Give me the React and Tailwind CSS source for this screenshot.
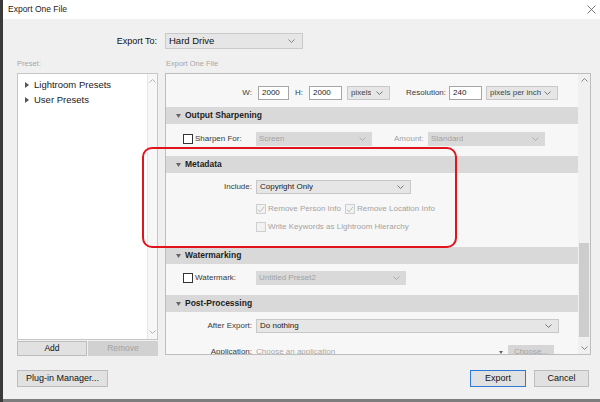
import React from 'react';

const Chevron = ({ className = '' }) => (
    <svg width="7" height="4" viewBox="0 0 7 4" className={className}>
        <path d="M0.5 0.5 L3.5 3.5 L6.5 0.5" fill="none" stroke="currentColor" strokeWidth="0.9" />
    </svg>
);

const Select = ({ w, children, disabled, dark }) => (
    <div
        className={`${w} h-[14px] flex items-center justify-between pl-[3px] pr-[6px] shrink-0 ${
            disabled
                ? 'bg-[#d9d9d9] text-[#a3a3a3]'
                : 'bg-[#e6e6e6] border border-[#c8c8c8] ' + (dark ? 'text-[#1a1a1a]' : 'text-[#444]')
        }`}
    >
        <span className="leading-none truncate">{children}</span>
        <Chevron className={disabled ? 'text-[#a8a8a8]' : 'text-[#666]'} />
    </div>
);

const Input = ({ w, children }) => (
    <div className={`${w} h-[14px] shrink-0 bg-white border border-[#a6a6a6] flex items-center pl-[3px] text-[#222] leading-none`}>
        {children}
    </div>
);

const Checkbox = ({ checked, disabled }) => (
    <span
        className={`w-[10px] h-[10px] shrink-0 flex items-center justify-center border ${
            disabled ? 'border-[#cfcfcf] bg-[#f2f2f2]' : 'border-[#333] bg-white'
        }`}
    >
        {checked && (
            <svg width="8" height="7" viewBox="0 0 8 7">
                <path d="M0.8 3.6 L3 5.8 L7.2 0.8" fill="none" stroke="#b5b5b5" strokeWidth="0.9" />
            </svg>
        )}
    </span>
);

const Header = ({ title }) => (
    <div className="h-[17px] shrink-0 bg-[#d9d9d9] flex items-center pl-[10px]">
        <svg width="5" height="4" viewBox="0 0 5 4" className="text-[#666]">
            <path d="M0 0 L5 0 L2.5 4 Z" fill="currentColor" />
        </svg>
        <span className="ml-[4px] text-[8.5px] font-bold text-[#1e1e1e] leading-none">{title}</span>
    </div>
);

const Label = ({ children }) => (
    <span className="w-[86px] shrink-0 text-right leading-none text-[#3a3a3a]">{children}</span>
);

const Btn = ({ w, children, primary, disabled }) => (
    <div
        className={`${w} h-full flex items-center justify-center leading-none ${
            primary
                ? 'border border-[#2d7ad6] bg-[#e1e1e1] text-[#111]'
                : disabled
                ? 'bg-[#d1d1d1] text-[#a3a3a3]'
                : 'border border-[#bdbdbd] bg-[#e1e1e1] text-[#111]'
        }`}
    >
        {children}
    </div>
);

const ListTriangle = () => (
    <svg width="4" height="6" viewBox="0 0 4 6" className="text-[#555] shrink-0">
        <path d="M0 0 L4 3 L0 6 Z" fill="currentColor" />
    </svg>
);

export default function App() {
    return (
        <div
            className="relative w-[600px] h-[402px] flex bg-[#7d7d7d] overflow-hidden"
            style={{ fontFamily: '"Liberation Sans", Arial, sans-serif' }}
        >
            <div className="w-[3px] h-full bg-[#3a3a3a] shrink-0" />
            <div className="flex-1 flex flex-col h-[399px]">
                {/* title bar */}
                <div className="h-[19px] bg-white flex items-center justify-between pl-[5px] pr-[4px] shrink-0">
                    <span className="text-[8.5px] text-[#222] leading-none">Export One File</span>
                    <svg width="9" height="9" viewBox="0 0 9 9">
                        <path d="M0.5 0.5 L8.5 8.5 M8.5 0.5 L0.5 8.5" stroke="#555" strokeWidth="0.8" />
                    </svg>
                </div>

                <div className="flex-1 bg-[#f0f0f0] flex flex-col">
                    {/* export to */}
                    <div className="mt-[14px] h-[16px] flex items-center">
                        <span className="w-[154px] text-right text-[9px] text-[#111] leading-none">Export To:</span>
                        <div className="ml-[8px] w-[138px] h-full bg-[#e6e6e6] border border-[#cacaca] flex items-center justify-between pl-[3px] pr-[7px]">
                            <span className="text-[9.5px] text-[#111] leading-none">Hard Drive</span>
                            <Chevron className="text-[#777]" />
                        </div>
                    </div>

                    {/* labels */}
                    <div className="mt-[9px] h-[11px] flex items-center text-[7.5px] text-[#a6a6a6] leading-none">
                        <span className="ml-[14px] w-[148px]">Preset:</span>
                        <span className="ml-[1px]">Export One File</span>
                    </div>

                    {/* main */}
                    <div className="mt-[4px] flex items-start">
                        {/* preset list */}
                        <div className="ml-[14px] w-[141px] flex flex-col">
                            <div className="h-[267px] bg-white border border-[#c6c6c6] flex">
                                <div className="flex-1 pt-[3px] pl-[7px] text-[9.5px] text-[#1a1a1a]">
                                    <div className="h-[15px] flex items-center gap-[5px]">
                                        <ListTriangle />
                                        <span className="leading-none">Lightroom Presets</span>
                                    </div>
                                    <div className="h-[15px] flex items-center gap-[5px]">
                                        <ListTriangle />
                                        <span className="leading-none">User Presets</span>
                                    </div>
                                </div>
                                <div className="w-[10px] bg-[#f7f7f7] border-l border-[#e6e6e6] flex flex-col items-center justify-between py-[5px] text-[#aaa]">
                                    <Chevron className="rotate-180" />
                                    <Chevron />
                                </div>
                            </div>
                            <div className="mt-[1px] h-[15px] flex gap-[1px] text-[8.5px]">
                                <Btn w="w-[70px]">Add</Btn>
                                <Btn w="w-[70px]" disabled>
                                    Remove
                                </Btn>
                            </div>
                        </div>

                        {/* export panel */}
                        <div className="ml-[7px] w-[426px] h-[282px] border border-[#bdbdbd] flex overflow-hidden">
                            <div className="w-[412px] h-full bg-[#f7f7f7] flex flex-col overflow-hidden text-[8px] text-[#3a3a3a]">
                                {/* image sizing tail */}
                                <div className="h-[33px] shrink-0 pt-[12px]">
                                    <div className="h-[14px] flex items-center">
                                        <Label>W:</Label>
                                        <div className="ml-[6px]">
                                            <Input w="w-[31px]">2000</Input>
                                        </div>
                                        <span className="ml-[6px] leading-none">H:</span>
                                        <div className="ml-[6px]">
                                            <Input w="w-[33px]">2000</Input>
                                        </div>
                                        <div className="ml-[5px]">
                                            <Select w="w-[43px]">pixels</Select>
                                        </div>
                                        <span className="ml-[16px] w-[41px] leading-none">Resolution:</span>
                                        <div className="ml-[2px]">
                                            <Input w="w-[33px]">240</Input>
                                        </div>
                                        <div className="ml-[4px]">
                                            <Select w="w-[72px]">pixels per inch</Select>
                                        </div>
                                    </div>
                                </div>

                                <Header title="Output Sharpening" />
                                <div className="h-[32px] shrink-0 pt-[8px]">
                                    <div className="h-[14px] flex items-center">
                                        <div className="w-[90px] shrink-0 pl-[17px] flex items-center gap-[2px]">
                                            <Checkbox />
                                            <span className="leading-none">Sharpen For:</span>
                                        </div>
                                        <Select w="w-[116px]" disabled>
                                            Screen
                                        </Select>
                                        <span className="ml-[22px] w-[34px] leading-none text-[#a3a3a3]">Amount:</span>
                                        <Select w="w-[117px]" disabled>
                                            Standard
                                        </Select>
                                    </div>
                                </div>

                                <Header title="Metadata" />
                                <div className="h-[74px] shrink-0 pt-[7px]">
                                    <div className="h-[14px] flex items-center">
                                        <Label>Include:</Label>
                                        <div className="ml-[4px]">
                                            <Select w="w-[155px]" dark>
                                                Copyright Only
                                            </Select>
                                        </div>
                                    </div>
                                    <div className="mt-[10px] h-[10px] flex items-center pl-[90px] text-[#a3a3a3]">
                                        <Checkbox checked disabled />
                                        <span className="ml-[2px] w-[77px] leading-none">Remove Person Info</span>
                                        <Checkbox checked disabled />
                                        <span className="ml-[2px] leading-none">Remove Location Info</span>
                                    </div>
                                    <div className="mt-[8px] h-[10px] flex items-center pl-[90px] text-[#a3a3a3]">
                                        <Checkbox disabled />
                                        <span className="ml-[2px] leading-none">Write Keywords as Lightroom Hierarchy</span>
                                    </div>
                                </div>

                                <Header title="Watermarking" />
                                <div className="h-[31px] shrink-0 pt-[7px]">
                                    <div className="h-[14px] flex items-center">
                                        <div className="w-[90px] shrink-0 pl-[17px] flex items-center gap-[2px]">
                                            <Checkbox />
                                            <span className="leading-none">Watermark:</span>
                                        </div>
                                        <Select w="w-[150px]" disabled>
                                            Untitled Preset2
                                        </Select>
                                    </div>
                                </div>

                                <Header title="Post-Processing" />
                                <div className="shrink-0 pt-[7px]">
                                    <div className="h-[14px] flex items-center">
                                        <Label>After Export:</Label>
                                        <div className="ml-[4px]">
                                            <Select w="w-[303px]" dark>
                                                Do nothing
                                            </Select>
                                        </div>
                                    </div>
                                    <div className="mt-[12px] h-[14px] flex items-center">
                                        <Label>Application:</Label>
                                        <span className="ml-[4px] w-[243px] leading-none text-[#a8a8a8]">Choose an application</span>
                                        <svg width="4" height="3" viewBox="0 0 4 3" className="text-[#666]">
                                            <path d="M0 0 L4 0 L2 3 Z" fill="currentColor" />
                                        </svg>
                                        <div className="ml-[5px] w-[46px] h-full bg-[#d6d6d6] text-[#a3a3a3] flex items-center justify-center leading-none">
                                            Choose...
                                        </div>
                                    </div>
                                </div>
                            </div>

                            {/* scrollbar */}
                            <div className="w-[12px] h-full bg-[#f0f0f0] flex flex-col items-center text-[#777]">
                                <div className="h-[12px] flex items-center justify-center">
                                    <Chevron className="rotate-180" />
                                </div>
                                <div className="h-[157px]" />
                                <div className="w-[10px] h-[94px] bg-[#cdcdcd]" />
                                <div className="flex-1" />
                                <div className="h-[12px] flex items-center justify-center">
                                    <Chevron />
                                </div>
                            </div>
                        </div>
                    </div>

                    {/* bottom buttons */}
                    <div className="mt-[14px] h-[17px] flex items-center text-[9px] pl-[14px] pr-[11px]">
                        <Btn w="w-[91px]">Plug-in Manager...</Btn>
                        <div className="flex-1" />
                        <div className="h-full flex gap-[8px]">
                            <Btn w="w-[56px]" primary>
                                Export
                            </Btn>
                            <Btn w="w-[55px]">Cancel</Btn>
                        </div>
                    </div>
                </div>
            </div>

            {/* annotation */}
            <div className="absolute left-[142px] top-[147px] w-[315px] h-[101px] border-2 border-[#e3131b] rounded-[10px] pointer-events-none" />
        </div>
    );
}
